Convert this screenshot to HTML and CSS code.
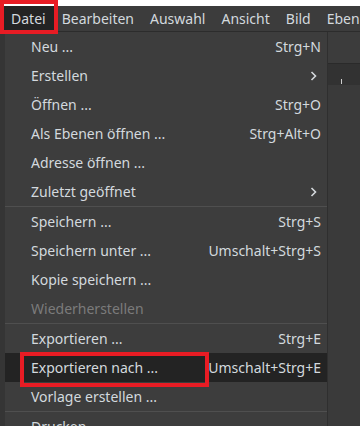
FILE: index.html
```html
<!DOCTYPE html>
<html lang="de">
<head>
<meta charset="utf-8">
<link rel="stylesheet" href="styles.css">
</head>
<body>
<div class="screen">
  <div class="topgap"></div>
  <nav class="menubar">
    <span class="mb-item active">Datei</span>
    <span class="mb-item">Bearbeiten</span>
    <span class="mb-item">Auswahl</span>
    <span class="mb-item">Ansicht</span>
    <span class="mb-item">Bild</span>
    <span class="mb-item">Ebene</span>
  </nav>
  <div class="workarea">
    <div class="leftstrip"></div>
    <div class="menu">
      <div class="item"><span>Neu ...</span><span class="sc">Strg+N</span></div>
      <div class="item"><span>Erstellen</span><svg class="chev" width="7" height="10" viewBox="0 0 7 10"><path d="M1.5 1 L5.5 5 L1.5 9" fill="none" stroke="#d4d8dc" stroke-width="1.6"/></svg></div>
      <div class="item"><span>Öffnen ...</span><span class="sc">Strg+O</span></div>
      <div class="item"><span>Als Ebenen öffnen ...</span><span class="sc">Strg+Alt+O</span></div>
      <div class="item"><span>Adresse öffnen ...</span></div>
      <div class="item"><span>Zuletzt geöffnet</span><svg class="chev" width="7" height="10" viewBox="0 0 7 10"><path d="M1.5 1 L5.5 5 L1.5 9" fill="none" stroke="#d4d8dc" stroke-width="1.6"/></svg></div>
      <div class="sep"></div>
      <div class="item"><span>Speichern ...</span><span class="sc">Strg+S</span></div>
      <div class="item"><span>Speichern unter ...</span><span class="sc">Umschalt+Strg+S</span></div>
      <div class="item"><span>Kopie speichern ...</span></div>
      <div class="item disabled"><span>Wiederherstellen</span></div>
      <div class="sep"></div>
      <div class="item"><span>Exportieren ...</span><span class="sc">Strg+E</span></div>
      <div class="item hover"><span>Exportieren nach ...</span><span class="sc">Umschalt+Strg+E</span></div>
      <div class="item"><span>Vorlage erstellen ...</span></div>
      <div class="sep"></div>
      <div class="item last"><span>Drucken ...</span></div>
    </div>
    <div class="rightside">
      <div class="rs-top"></div>
      <div class="rs-tab"><span class="tick"></span></div>
      <div class="rs-rest"></div>
    </div>
  </div>
  <div class="mark mark-datei"></div>
  <div class="mark mark-export"></div>
</div>
</body>
</html>
```

FILE: styles.css
```css
* { box-sizing: border-box; }
html, body { margin: 0; padding: 0; background: #ffffff; }
body {
  font-family: "Noto Sans", "Open Sans", sans-serif;
  font-size: 14px;
  color: #d3d9de;
  overflow: hidden;
}
.screen {
  position: relative;
  width: 360px;
  height: 426px;
  overflow: hidden;
  display: flex;
  flex-direction: column;
}
.topgap { height: 6px; background: #ffffff; flex: none; }
.menubar {
  height: 26px;
  flex: none;
  background: #3c3c3c;
  border-bottom: 1px solid #2c2c2c;
  display: flex;
  align-items: stretch;
  padding-left: 3px;
  white-space: nowrap;
}
.mb-item {
  display: flex;
  align-items: center;
  padding: 0 8px;
}
.mb-item.active { background: #232323; }
.workarea {
  flex: 1;
  display: flex;
  background: #383838;
}
.leftstrip { width: 5px; flex: none; background: #353535; }
.menu {
  width: 323px;
  flex: none;
  background: #3d3d3d;
  border-right: 1px solid #2f2f2f;
  display: flex;
  flex-direction: column;
}
.item {
  height: 29px;
  flex: none;
  display: flex;
  align-items: center;
  justify-content: space-between;
  padding: 0 6px 0 26px;
  white-space: nowrap;
}
.item.last { align-items: flex-start; padding-top: 5px; }
.item.disabled { color: #7b7b7b; }
.item.hover { background: #232323; }
.chev { margin-right: 4px; }
.sep { height: 1px; flex: none; background: #4f4f4f; }
.rightside { flex: 1; display: flex; flex-direction: column; }
.rs-top { height: 32px; background: #3c3c3c; border-bottom: 1px solid #2a2a2a; }
.rs-tab { height: 21px; background: #323232; position: relative; }
.tick { position: absolute; left: 13px; top: 15px; width: 1px; height: 5px; background: #cfcfcf; }
.rs-rest { flex: 1; background: #3a3a3a; }
.mark {
  position: absolute;
  border: 4px solid #e81c24;
}
.mark-datei { left: 0; top: 0; width: 58px; height: 34px; }
.mark-export { left: 20px; top: 352px; width: 189px; height: 35px; }
```
